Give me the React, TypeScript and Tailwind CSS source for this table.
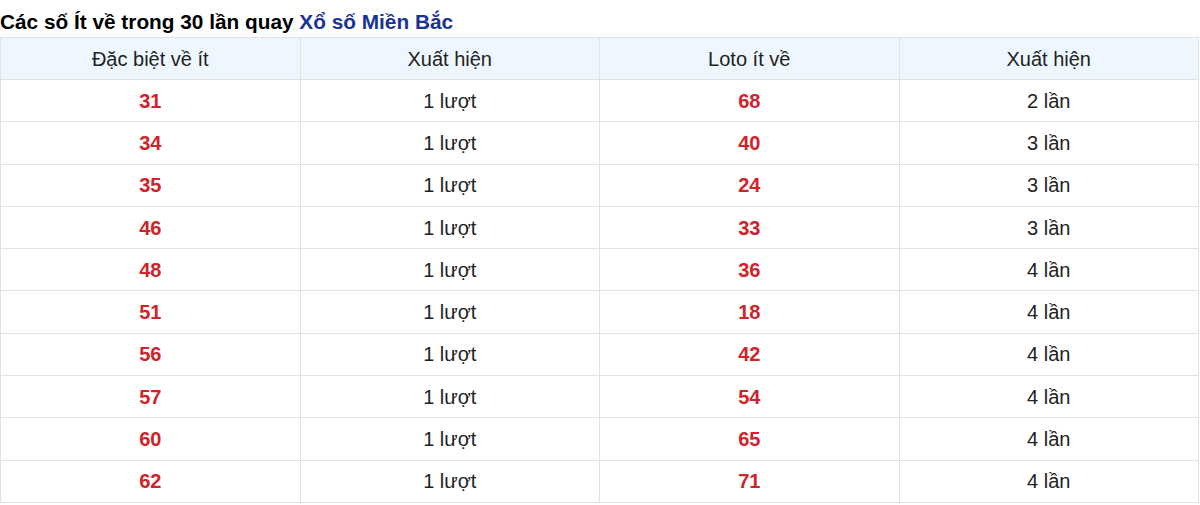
import React from 'react';

const rows: [string, string, string, string][] = [
  ['31', '1 lượt', '68', '2 lần'],
  ['34', '1 lượt', '40', '3 lần'],
  ['35', '1 lượt', '24', '3 lần'],
  ['46', '1 lượt', '33', '3 lần'],
  ['48', '1 lượt', '36', '4 lần'],
  ['51', '1 lượt', '18', '4 lần'],
  ['56', '1 lượt', '42', '4 lần'],
  ['57', '1 lượt', '54', '4 lần'],
  ['60', '1 lượt', '65', '4 lần'],
  ['62', '1 lượt', '71', '4 lần'],
];

const cell = 'border border-[#e2e2e2] text-center p-0';

export default function App() {
  return (
    <div className="w-[1200px] bg-white text-[#222] font-['Liberation_Sans',Arial,sans-serif]">
      <h2 className="h-[37px] pt-[10px] text-[20.8px] leading-[24px] font-bold text-black">
        Các số Ít về trong 30 lần quay <span className="text-[#1a3494]">Xổ số Miền Bắc</span>
      </h2>
      <table className="w-[1199px] border-collapse table-fixed text-[20px]">
        <thead>
          <tr className="h-[42px] bg-[#eef7ff]">
            <th className={`${cell} font-normal`}>Đặc biệt về ít</th>
            <th className={`${cell} font-normal`}>Xuất hiện</th>
            <th className={`${cell} font-normal`}>Loto ít về</th>
            <th className={`${cell} font-normal`}>Xuất hiện</th>
          </tr>
        </thead>
        <tbody>
          {rows.map(r => (
            <tr key={r[0]} className="h-[42.3px]">
              <td className={`${cell} font-bold text-[#d0232b]`}>{r[0]}</td>
              <td className={cell}>{r[1]}</td>
              <td className={`${cell} font-bold text-[#d0232b]`}>{r[2]}</td>
              <td className={cell}>{r[3]}</td>
            </tr>
          ))}
        </tbody>
      </table>
    </div>
  );
}
